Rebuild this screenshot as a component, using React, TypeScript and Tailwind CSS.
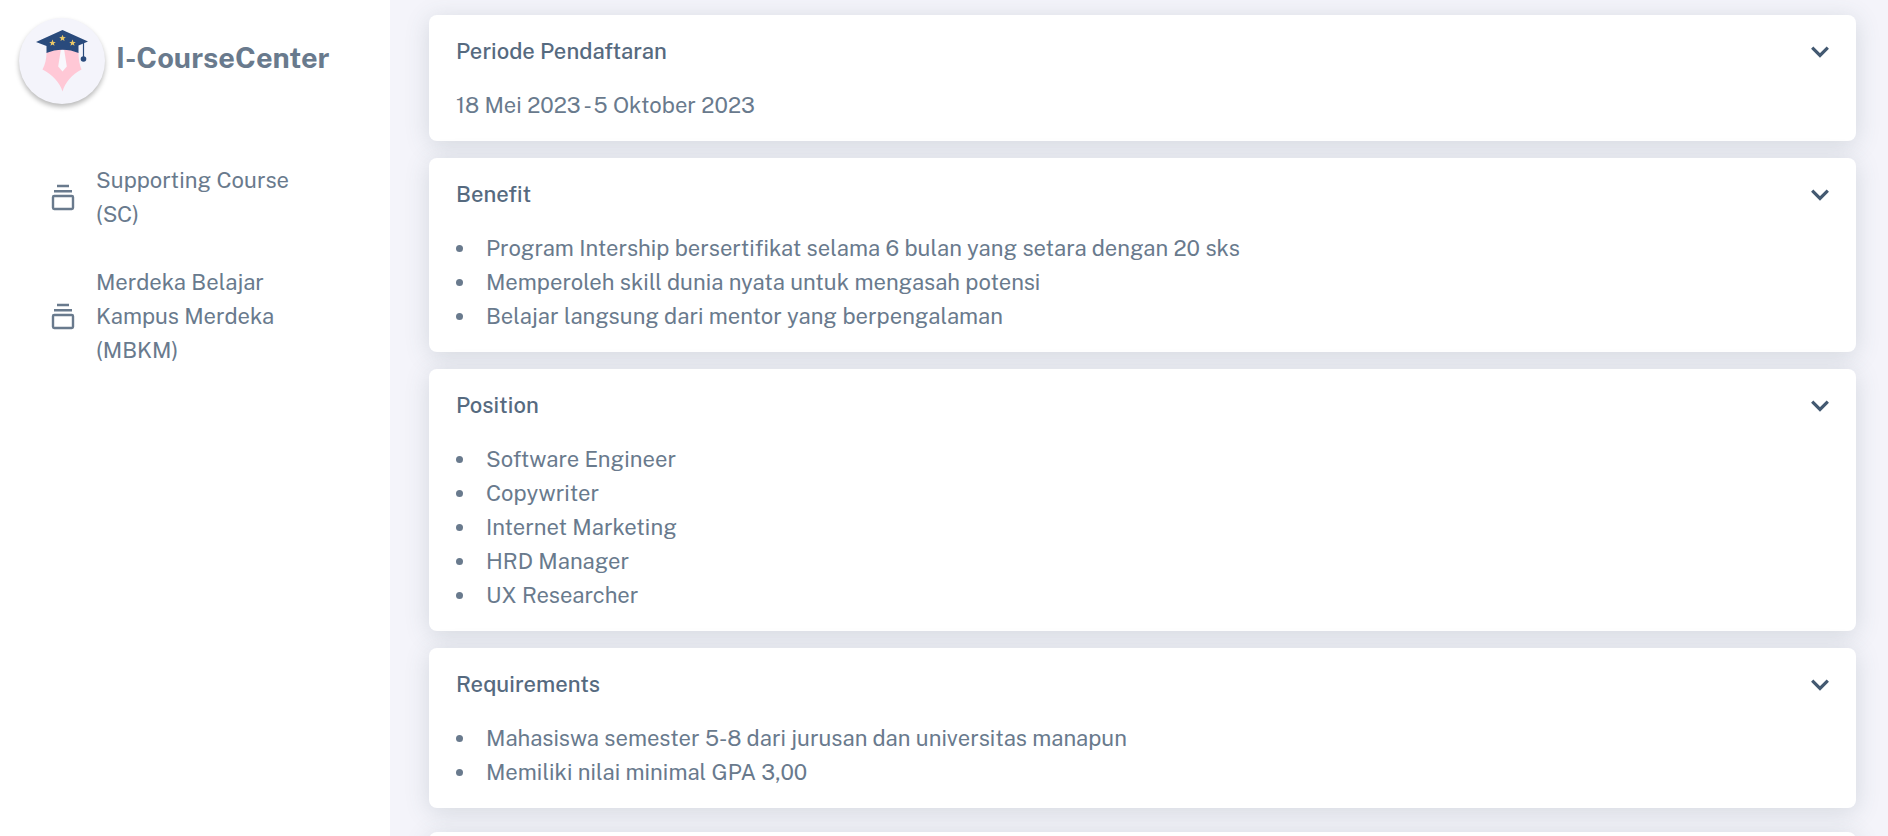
import { useState, type ReactNode } from "react";

const star = "M0-3.4.95-1.100 3.300-1.050 1.350.45 2.050 2.850 0 1.450-2.050 2.850-1.350.45-3.300-1.050-.95-1.100Z";

function Logo() {
  return (
    <svg viewBox="0 0 86 86" className="size-[86px] shrink-0 rounded-full bg-[#f4f4fb] shadow-[0_3px_5px_rgba(0,0,0,0.28)]" aria-hidden="true">
      <path d="M27.500 34.500C37 30 50 30 59.500 34.500C59.500 41 60.500 47 62.500 51.500C53 56 46 65 43.500 73.500C41 65 33 56 23.500 51.500C26 47 27.500 41 27.500 34.500Z" fill="#ffc8d6" />
      <path d="M41.800 32H45.200L47.800 48.500L43.500 53.500L39.200 48.500Z" fill="#f8f8fd" />
      <path d="M17 24 43.500 12 69 23.500 59.500 27.500V35C50 30.500 37 30.500 27.500 35V28Z" fill="#294a7c" />
      <path d="M64.500 25V40" stroke="#294a7c" strokeWidth="1.200" />
      <circle cx="64.500" cy="41" r="2.800" fill="#294a7c" />
      <path d={star} transform="translate(33.500 25)" fill="#e9c767" />
      <path d={star} transform="translate(43.500 20.200)" fill="#e9c767" />
      <path d={star} transform="translate(53.500 25)" fill="#e9c767" />
    </svg>
  );
}

function CollectionIcon() {
  return (
    <svg viewBox="0 0 24 27" className="h-[27px] w-6 shrink-0" fill="none" stroke="currentColor" aria-hidden="true">
      <path d="M6 2H18M3 7.200H21" strokeWidth="2.500" />
      <rect x="2" y="12" width="20" height="13" rx="1.200" strokeWidth="2.400" />
    </svg>
  );
}

function NavItem({ children }: { children: ReactNode }) {
  return (
    <a href="#" className="flex items-center gap-[21px] text-[22px] leading-[34px] text-[#697a8d]">
      <CollectionIcon />
      <span className="w-52">{children}</span>
    </a>
  );
}

function Card({ title, children }: { title: string; children: ReactNode }) {
  const [open, setOpen] = useState(true);
  return (
    <section className="shrink-0 rounded-lg bg-white shadow-[0_4px_24px_rgba(67,89,100,0.18)]">
      <h2>
        <button
          type="button"
          aria-expanded={open}
          onClick={() => setOpen(!open)}
          className="flex w-full items-center justify-between px-[27px] pt-[19px] pb-5 text-left text-[22px] leading-[34px] font-medium text-[#566a7f]"
        >
          {title}
          <svg viewBox="0 0 18 16" className="h-4 w-[18px]" fill="none" stroke="#435971" strokeWidth="3.200" aria-hidden="true">
            <path d="M1.200 4.700 9 12.500 16.800 4.700" />
          </svg>
        </button>
      </h2>
      {open && <div className="px-[27px] pb-[19px] text-[22px] leading-[34px]">{children}</div>}
    </section>
  );
}

function BulletList({ items }: { items: string[] }) {
  return (
    <ul>
      {items.map((item) => (
        <li key={item} className="flex items-center gap-[23px]">
          <span className="size-[7px] shrink-0 rounded-full bg-[#697a8d]" />
          {item}
        </li>
      ))}
    </ul>
  );
}

export default function App() {
  return (
    <div className="flex h-screen overflow-hidden bg-[#f4f4fa] font-['Public_Sans','Inter',sans-serif] text-[#697a8d]">
      <aside className="w-[390px] shrink-0 bg-white">
        <a href="#" className="flex items-center gap-[11px] px-[19px] pt-[18px]">
          <Logo />
          <span className="pb-[6px] text-[29px] leading-[38px] font-bold">I-CourseCenter</span>
        </a>
        <nav className="mt-[59px] flex flex-col gap-[34px] pl-[51px]">
          <NavItem>Supporting Course (SC)</NavItem>
          <NavItem>Merdeka Belajar Kampus Merdeka (MBKM)</NavItem>
        </nav>
      </aside>
      <main className="flex min-w-0 flex-1 flex-col gap-6 pt-[15px] pr-8 pl-[39px]">
        <div className="flex shrink-0 flex-col gap-[17px]">
          <Card title="Periode Pendaftaran">18 Mei 2023 - 5 Oktober 2023</Card>
          <Card title="Benefit">
            <BulletList
              items={[
                "Program Intership bersertifikat selama 6 bulan yang setara dengan 20 sks",
                "Memperoleh skill dunia nyata untuk mengasah potensi",
                "Belajar langsung dari mentor yang berpengalaman",
              ]}
            />
          </Card>
          <Card title="Position">
            <BulletList items={["Software Engineer", "Copywriter", "Internet Marketing", "HRD Manager", "UX Researcher"]} />
          </Card>
          <Card title="Requirements">
            <BulletList items={["Mahasiswa semester 5-8 dari jurusan dan universitas manapun", "Memiliki nilai minimal GPA 3,00"]} />
          </Card>
        </div>
        <div className="h-32 shrink-0 rounded-lg bg-white shadow-[0_4px_24px_rgba(67,89,100,0.18)]" />
      </main>
    </div>
  );
}
